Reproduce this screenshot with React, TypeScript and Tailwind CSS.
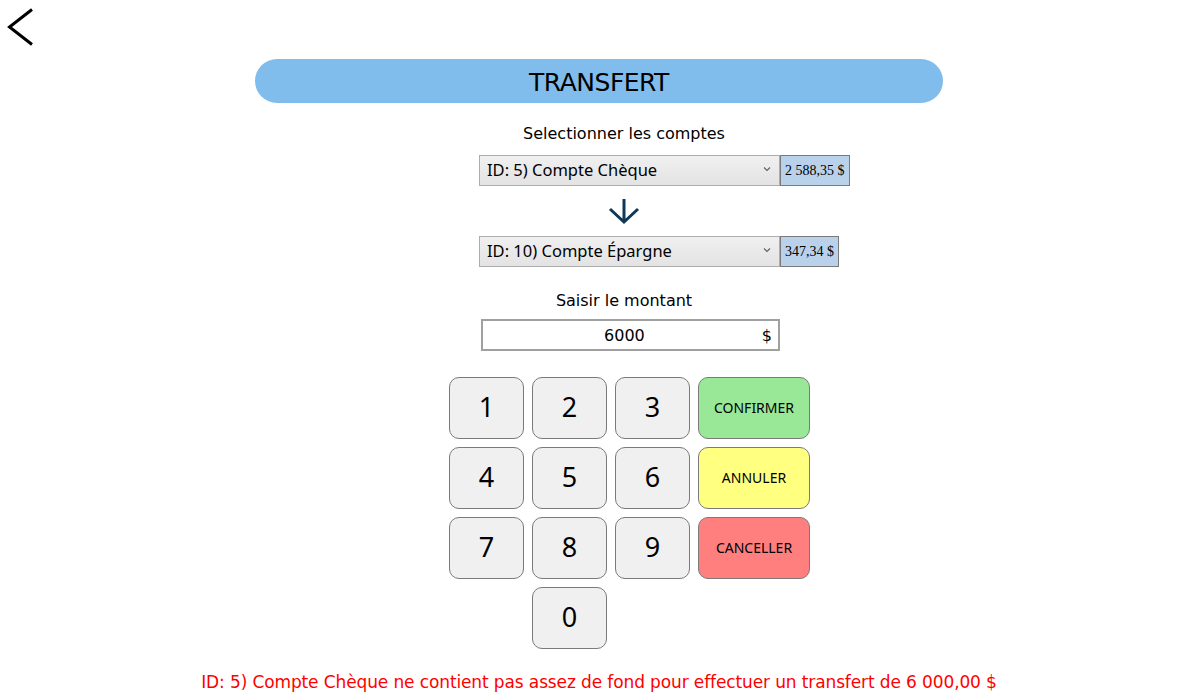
import React from "react";

const gothic = "font-['DejaVu_Sans',sans-serif]";
const ui = "font-['Noto_Sans','Open_Sans',sans-serif]";

function Key({ label }: { label: string }) {
  return (
    <button
      className={`w-[75px] h-[62px] rounded-[10px] border border-[#7a7a7a] bg-[#f0f0f0] text-[27px] text-black flex items-center justify-center ${ui}`}
    >
      {label}
    </button>
  );
}

function Action({ label, bg }: { label: string; bg: string }) {
  return (
    <button
      className={`w-[112px] h-[62px] rounded-[10px] border border-[#7a7a7a] ${bg} text-[14px] text-black flex items-center justify-center ${ui}`}
    >
      {label}
    </button>
  );
}

function AccountRow({ name, balance }: { name: string; balance: string }) {
  return (
    <div className="flex">
      <div className={`w-[301px] h-[31px] border border-[#acacac] bg-gradient-to-b from-[#f0f0f0] to-[#e3e3e3] flex items-center pl-[7px] pr-[8px] ${ui}`}>
        <span className="flex-1 text-[16.5px] text-black">{name}</span>
        <svg width="8" height="6" viewBox="0 0 8 6" className="mt-[-2px]">
          <path d="M1 1.5 L4 4.5 L7 1.5" fill="none" stroke="#606060" strokeWidth="1.1" />
        </svg>
      </div>
      <div className="h-[31px] border border-[#7a7a7a] bg-[#b9d1ea] px-[4px] flex items-center font-['Liberation_Serif',serif] text-[14px] text-black">
        {balance}
      </div>
    </div>
  );
}

export default function App() {
  return (
    <div className="w-[1185px] h-[695px] bg-white overflow-hidden flex flex-col">
      <div className="pl-[7px] pt-[8px] h-[46px]">
        <svg width="28" height="38" viewBox="0 0 28 38" className="block">
          <path d="M25 1.5 L2.5 19 L25 36.5" fill="none" stroke="#000" strokeWidth="3" />
        </svg>
      </div>
      <div className="ml-[255px] mt-[13px] w-[688px] h-[46px] rounded-full bg-[#80bcec] flex items-center justify-center pt-[3px]">
        <span className={`${gothic} text-[25px] text-black tracking-[-0.5px]`}>TRANSFERT</span>
      </div>

      <div className="ml-[479px] flex flex-col">
        <div className={`w-[290px] mt-[19px] h-[22px] text-center text-[16px] text-black ${gothic}`}>
          Selectionner les comptes
        </div>
        <div className="mt-[11px]">
          <AccountRow name="ID: 5) Compte Chèque" balance="2 588,35 $" />
        </div>
        <div className="w-[290px] h-[50px] flex items-center justify-center">
          <svg width="34" height="28" viewBox="0 0 34 28">
            <path d="M17 2 V25 M3 12 L17 25 L31 12" fill="none" stroke="#0f3858" strokeWidth="3" />
          </svg>
        </div>
        <AccountRow name="ID: 10) Compte Épargne" balance="347,34 $" />
        <div className={`w-[290px] mt-[22px] h-[22px] text-center text-[16px] text-black ${gothic}`}>
          Saisir le montant
        </div>
        <div className={`ml-[2px] mt-[8px] w-[299px] h-[32px] border-2 border-[#a0a0a0] bg-white flex items-center ${gothic} text-[16px] text-black`}>
          <span className="flex-1 text-center pl-[4px] pt-[2px]">6000</span>
          <span className="pr-[6px] pt-[2px]">$</span>
        </div>
      </div>

      <div className="ml-[449px] mt-[26px] flex flex-col gap-[8px]">
        <div className="flex gap-[8px]">
          <Key label="1" />
          <Key label="2" />
          <Key label="3" />
          <Action label="CONFIRMER" bg="bg-[#98e898]" />
        </div>
        <div className="flex gap-[8px]">
          <Key label="4" />
          <Key label="5" />
          <Key label="6" />
          <Action label="ANNULER" bg="bg-[#ffff80]" />
        </div>
        <div className="flex gap-[8px]">
          <Key label="7" />
          <Key label="8" />
          <Key label="9" />
          <Action label="CANCELLER" bg="bg-[#ff7f7f]" />
        </div>
        <div className="flex gap-[8px] pl-[83px]">
          <Key label="0" />
        </div>
      </div>

      <div className={`mt-[21px] ml-[200px] w-[798px] text-center text-[17px] tracking-[-0.12px] text-[#ff0000] whitespace-nowrap ${gothic}`}>
        ID: 5) Compte Chèque ne contient pas assez de fond pour effectuer un transfert de 6 000,00 $
      </div>
    </div>
  );
}
